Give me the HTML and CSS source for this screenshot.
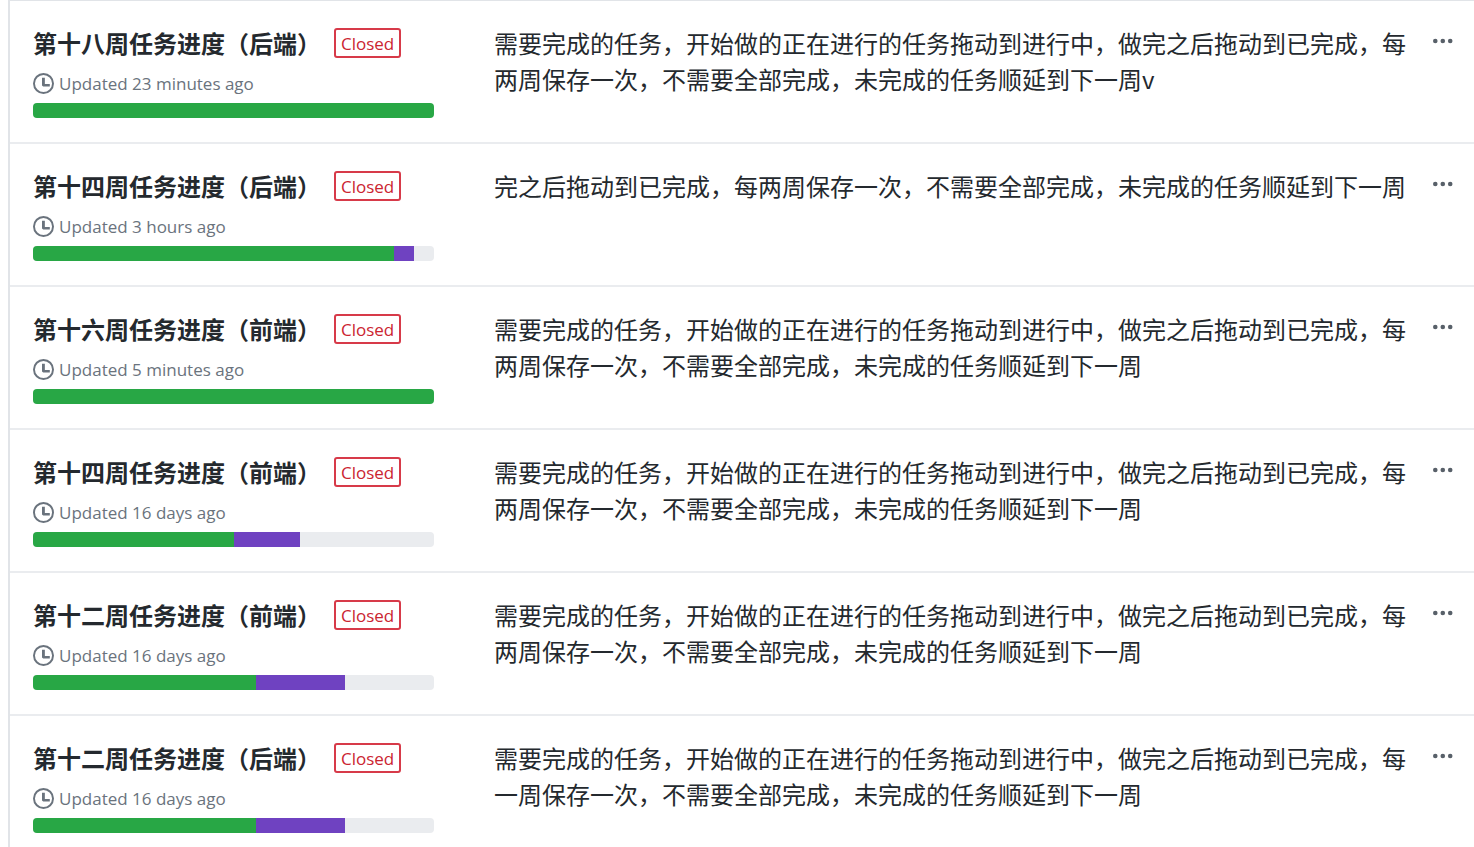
FILE: index.html
```
<!DOCTYPE html>
<html lang="zh-CN">
<head>
<meta charset="utf-8">
<meta name="viewport" content="width=device-width, initial-scale=1">
<title>Projects</title>
<link rel="stylesheet" href="styles.css">
</head>
<body>
<svg class="sprite" aria-hidden="true">
  <symbol id="clock" viewBox="0 0 14 14">
    <path fill-rule="evenodd" d="M7 0a7 7 0 1 1 0 14A7 7 0 0 1 7 0zm0 1.3a5.7 5.7 0 1 0 0 11.4A5.7 5.7 0 0 0 7 1.3zM6 3.2h1.9v4.1h3.3V9H6.8L6 8.3z"/>
  </symbol>
  <symbol id="dots" viewBox="0 0 20 6">
    <circle cx="2.3" cy="3" r="2.3"/><circle cx="9.8" cy="3" r="2.3"/><circle cx="17.2" cy="3" r="2.3"/>
  </symbol>
</svg>
<main class="projects">
  <article class="project">
    <div class="summary">
      <div class="heading"><h2 class="title">第十八周任务进度（后端）</h2><span class="state">Closed</span></div>
      <p class="updated"><svg class="clock"><use href="#clock"/></svg>Updated 23 minutes ago</p>
      <div class="progress"><span class="done" style="width:100%"></span></div>
    </div>
    <p class="description">需要完成的任务，开始做的正在进行的任务拖动到进行中，做完之后拖动到已完成，每两周保存一次，不需要全部完成，未完成的任务顺延到下一周v</p>
    <button class="menu" type="button" aria-label="Project menu"><svg class="dots"><use href="#dots"/></svg></button>
  </article>
  <article class="project">
    <div class="summary">
      <div class="heading"><h2 class="title">第十四周任务进度（后端）</h2><span class="state">Closed</span></div>
      <p class="updated"><svg class="clock"><use href="#clock"/></svg>Updated 3 hours ago</p>
      <div class="progress"><span class="done" style="width:90%"></span><span class="doing" style="width:5%"></span></div>
    </div>
    <p class="description">完之后拖动到已完成，每两周保存一次，不需要全部完成，未完成的任务顺延到下一周</p>
    <button class="menu" type="button" aria-label="Project menu"><svg class="dots"><use href="#dots"/></svg></button>
  </article>
  <article class="project">
    <div class="summary">
      <div class="heading"><h2 class="title">第十六周任务进度（前端）</h2><span class="state">Closed</span></div>
      <p class="updated"><svg class="clock"><use href="#clock"/></svg>Updated 5 minutes ago</p>
      <div class="progress"><span class="done" style="width:100%"></span></div>
    </div>
    <p class="description">需要完成的任务，开始做的正在进行的任务拖动到进行中，做完之后拖动到已完成，每两周保存一次，不需要全部完成，未完成的任务顺延到下一周</p>
    <button class="menu" type="button" aria-label="Project menu"><svg class="dots"><use href="#dots"/></svg></button>
  </article>
  <article class="project">
    <div class="summary">
      <div class="heading"><h2 class="title">第十四周任务进度（前端）</h2><span class="state">Closed</span></div>
      <p class="updated"><svg class="clock"><use href="#clock"/></svg>Updated 16 days ago</p>
      <div class="progress"><span class="done" style="width:50%"></span><span class="doing" style="width:16.67%"></span></div>
    </div>
    <p class="description">需要完成的任务，开始做的正在进行的任务拖动到进行中，做完之后拖动到已完成，每两周保存一次，不需要全部完成，未完成的任务顺延到下一周</p>
    <button class="menu" type="button" aria-label="Project menu"><svg class="dots"><use href="#dots"/></svg></button>
  </article>
  <article class="project">
    <div class="summary">
      <div class="heading"><h2 class="title">第十二周任务进度（前端）</h2><span class="state">Closed</span></div>
      <p class="updated"><svg class="clock"><use href="#clock"/></svg>Updated 16 days ago</p>
      <div class="progress"><span class="done" style="width:55.56%"></span><span class="doing" style="width:22.22%"></span></div>
    </div>
    <p class="description">需要完成的任务，开始做的正在进行的任务拖动到进行中，做完之后拖动到已完成，每两周保存一次，不需要全部完成，未完成的任务顺延到下一周</p>
    <button class="menu" type="button" aria-label="Project menu"><svg class="dots"><use href="#dots"/></svg></button>
  </article>
  <article class="project">
    <div class="summary">
      <div class="heading"><h2 class="title">第十二周任务进度（后端）</h2><span class="state">Closed</span></div>
      <p class="updated"><svg class="clock"><use href="#clock"/></svg>Updated 16 days ago</p>
      <div class="progress"><span class="done" style="width:55.56%"></span><span class="doing" style="width:22.22%"></span></div>
    </div>
    <p class="description">需要完成的任务，开始做的正在进行的任务拖动到进行中，做完之后拖动到已完成，每一周保存一次，不需要全部完成，未完成的任务顺延到下一周</p>
    <button class="menu" type="button" aria-label="Project menu"><svg class="dots"><use href="#dots"/></svg></button>
  </article>
</main>
</body>
</html>
```
FILE: styles.css
```
* { box-sizing: border-box; }
body {
  margin: 0;
  background: #fff;
  color: #24292e;
  font-family: "Open Sans", "Noto Sans CJK SC", sans-serif;
}
.sprite { display: none; }
.projects {
  margin-left: 8px;
  border-top: 1px solid #e1e4e8;
  border-left: 2px solid #e1e4e8;
}
.project {
  display: flex;
  align-items: flex-start;
  padding: 24px 21px 24px 23px;
  border-bottom: 2px solid #eaecef;
}
.summary { flex: 0 0 401px; margin-right: 60px; }
.heading { display: flex; align-items: center; gap: 13px; height: 36px; }
.title {
  margin: 0;
  font: 700 24px/36px "Noto Sans CJK SC", sans-serif;
  white-space: nowrap;
}
.state {
  height: 30px;
  padding: 0 5px;
  border: 2px solid #d73a49;
  border-radius: 3px;
  color: #cb2431;
  font-size: 17px;
  line-height: 27px;
}
.updated {
  display: flex;
  align-items: center;
  gap: 5px;
  margin: 9px 0 6px;
  color: #6a737d;
  font-size: 17px;
  line-height: 27px;
}
.clock { width: 21px; height: 21px; fill: #6a737d; }
.progress {
  display: flex;
  height: 15px;
  overflow: hidden;
  border-radius: 4px;
  background: #eaecef;
}
.done { background: #28a745; }
.doing { background: #6f42c1; }
.description {
  flex: 1;
  margin: 0;
  font-family: "Noto Sans CJK SC", sans-serif;
  font-size: 24px;
  font-weight: 400;
  line-height: 36px;
}
.menu {
  display: flex;
  margin: 13px 0 0 26px;
  padding: 0;
  border: 0;
  background: none;
  cursor: pointer;
}
.dots { width: 20px; height: 6px; fill: #586069; }
```
